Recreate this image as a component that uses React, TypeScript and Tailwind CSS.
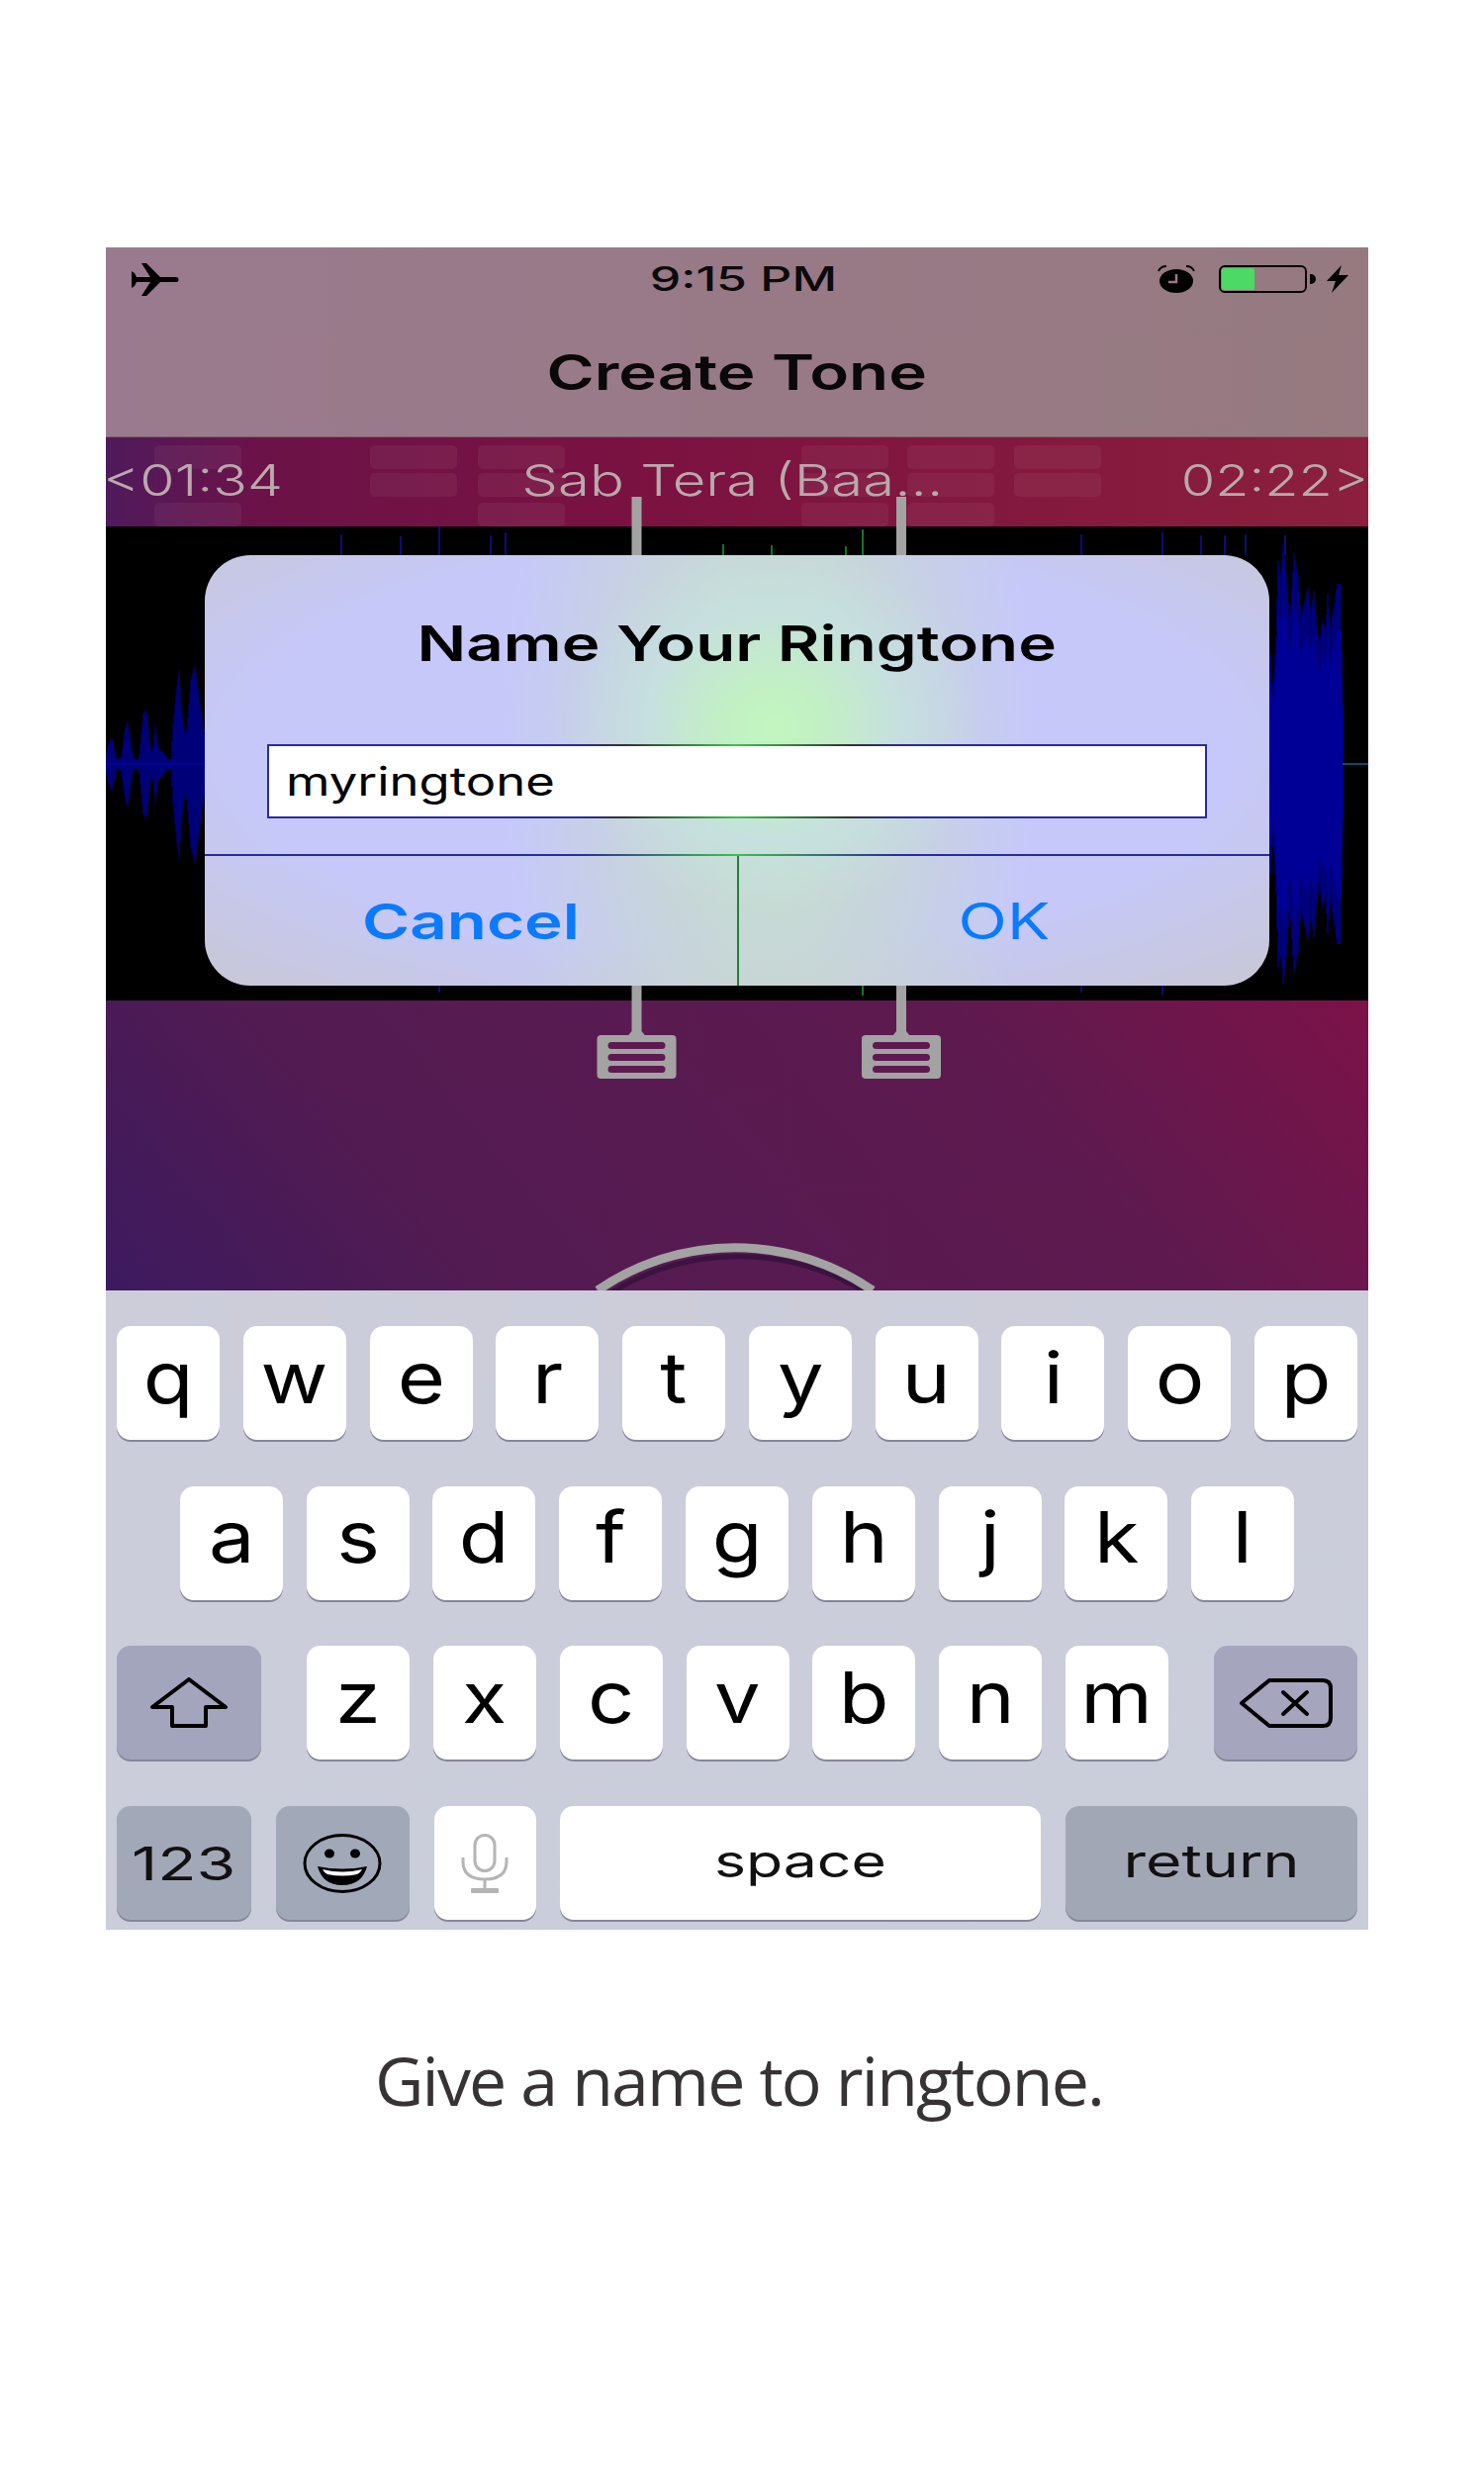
import React from "react";

const interp = (pts: number[][], x: number) => {
  for (let i = 0; i < pts.length - 1; i++) {
    const [a, av] = pts[i];
    const [b, bv] = pts[i + 1];
    if (x >= a && x <= b) return av + ((bv - av) * (x - a)) / (b - a);
  }
  return 0;
};

const leftPts = [
  [107, 5], [109, 18], [111, 22], [113, 27], [115, 18], [117, 8], [119, 4], [123, 8], [125, 25], [127, 38], [129, 42],
  [131, 30], [133, 15], [135, 6], [139, 4], [141, 10], [143, 30], [145, 50], [147, 55], [149, 50], [151, 25], [153, 12],
  [155, 18], [157, 40], [159, 22], [161, 14], [165, 12], [167, 8], [169, 5], [173, 5], [175, 40], [177, 60], [179, 80],
  [181, 95], [183, 60], [185, 45], [187, 30], [189, 35], [191, 60], [193, 85], [195, 92], [197, 100], [199, 85], [201, 70],
  [203, 55], [205, 40], [207, 30],
];
const rightPts = [
  [1283, 125], [1287, 70], [1290, 130], [1292, 205], [1295, 190], [1297, 222], [1300, 195], [1303, 150], [1305, 160],
  [1308, 212], [1312, 190], [1315, 145], [1318, 160], [1322, 178], [1325, 150], [1328, 175], [1331, 140], [1333, 120],
  [1337, 145], [1340, 130], [1342, 172], [1345, 130], [1347, 150], [1350, 170], [1352, 182], [1355, 182], [1357, 50],
];
const xs = (from: number, to: number, step: number) => {
  const out: number[] = [];
  for (let x = from; x <= to; x += step) out.push(x);
  return out;
};

const blueTicks = [
  [345, 540, 561], [405, 542, 561], [444, 532, 561], [496, 541, 561], [511, 538, 561], [1093, 540, 561], [1175, 538, 561],
  [1214, 541, 561], [1238, 541, 561], [1259, 540, 561], [1299, 541, 561], [444, 996, 1003], [1093, 996, 1003], [1175, 996, 1005],
];
const greenTicks = [
  [731, 550, 561], [780, 551, 561], [855, 552, 561], [872, 535, 561], [872, 996, 1006],
];

const Waveform = () => (
  <svg viewBox="0 0 1276 479" className="absolute inset-0 h-full w-full">
    <line x1="0" y1="240" x2="100" y2="240" stroke="#0a0a70" strokeWidth="2" />
    {xs(107, 207, 1).map((x) => {
      const a = interp(leftPts, x);
      return <line key={x} x1={x - 107} x2={x - 107} y1={240 - a} y2={240 + a} stroke="#0000a0" strokeWidth="1" />;
    })}
    {xs(1283, 1357, 1).map((x) => {
      const a = interp(rightPts, x);
      return <line key={x} x1={x - 107} x2={x - 107} y1={240 - a} y2={240 + a} stroke={x % 5 === 0 ? "#00006e" : "#00009a"} strokeWidth="1.2" />;
    })}
    {xs(1283, 1357, 1).map((x) => {
      const a = Math.max(60, interp(rightPts, x) * 0.74);
      return <line key={`core-${x}`} x1={x - 107} x2={x - 107} y1={240 - a} y2={240 + a} stroke="#000098" strokeWidth="1.5" />;
    })}
    <line x1="1250" y1="240" x2="1276" y2="240" stroke="#0c4a66" strokeWidth="2" />
    {blueTicks.map(([x, a, b]) => (
      <line key={`${x}-${a}`} x1={x - 107} x2={x - 107} y1={a - 532} y2={b - 532} stroke="#12129a" strokeWidth="1.5" />
    ))}
    {greenTicks.map(([x, a, b]) => (
      <line key={`${x}-${a}`} x1={x - 107} x2={x - 107} y1={a - 532} y2={b - 532} stroke="#1f9a35" strokeWidth="1.5" />
    ))}
  </svg>
);

const Handle = ({ x }: { x: number }) => (
  <g>
    <rect x={x - 5} y="60" width="10" height="540" fill="#a3a3a3" />
    <polygon points={`${x - 5},600 ${x + 5},600 ${x + 9},605 ${x - 9},605`} fill="#a3a3a3" />
    <rect x={x - 40} y="604" width="80" height="44" rx="4" fill="#a3a3a3" />
    {[611, 623, 635].map((y) => (
      <rect key={y} x={x - 29} y={y} width="58" height="7" rx="3.5" fill="#5e1a50" />
    ))}
  </g>
);

const Overlay = () => (
  <svg viewBox="0 0 1276 862" className="absolute inset-0 h-full w-full">
    <Handle x={536.5} />
    <Handle x={804} />
    <path d="M506 862 A245 245 0 0 1 769 862" fill="none" stroke="#3c1240" strokeWidth="5" transform="translate(2 4)" />
    <path d="M497 862 A245 245 0 0 1 775 862" fill="none" stroke="#a3a3a3" strokeWidth="9" />
  </svg>
);

const squares = [
  [156, 450], [374, 450], [483, 450], [810, 450], [917, 450], [1025, 450],
  [374, 478], [483, 478], [810, 478], [917, 478], [1025, 478],
  [156, 508], [483, 508], [810, 508], [917, 508],
];

const Key = ({ children, className }: { children?: React.ReactNode; className: string }) => (
  <div className={`flex h-[115px] items-center justify-center rounded-[14px] shadow-[0_2px_0_#85869a] ${className}`}>{children}</div>
);

const Letter = ({ c }: { c: string }) => (
  <Key className="w-[104px] bg-white">
    <span className="inline-block pb-[12px] font-['Inter'] text-[72px] leading-none text-black scale-x-[1.15]">{c}</span>
  </Key>
);

const App = () => (
  <div className="min-h-[2500px] bg-white pt-[250px] font-['Inter',sans-serif]">
    <div className="ml-[107px] w-[1276px]">
      {/* Nav */}
      <div className="h-[192px] border-b border-[#7d5f68] bg-[linear-gradient(90deg,#9a7a8e,#967a80)]">
        <div className="grid h-[60px] grid-cols-[1fr_auto_1fr] items-center px-[26px] pt-[4px]">
          <svg width="48" height="33" viewBox="0 0 48 33">
            <path d="M0 8 L3 10 L5 14 H19 L10 0 H15 L29 14 H45 A2.5 2.5 0 0 1 45 19 H29 L15 33 H10 L19 19 H5 L3 23 L0 25 Z" fill="#000" />
          </svg>
          <span className="ml-[12px] inline-block text-[34px] font-medium leading-none text-[#0d0a0c] scale-x-[1.47]">9:15 PM</span>
          <div className="flex items-center justify-end">
            <svg width="38" height="28" viewBox="0 0 38 28" className="mr-[24px]">
              <ellipse cx="19" cy="16" rx="17" ry="12" fill="#000" />
              <path d="M19 9 V17 H11" stroke="#9a7a80" strokeWidth="2.5" fill="none" />
              <path d="M1 6 Q3 1 9 1 M37 6 Q35 1 29 1" stroke="#000" strokeWidth="2" fill="none" />
            </svg>
            <div className="flex h-[28px] w-[89px] items-stretch rounded-[6px] border-2 border-black p-[1px]">
              <div className="w-[33px] rounded-[2px] bg-[#4cd964]" />
            </div>
            <div className="ml-[3px] h-[10px] w-[6px] rounded-r-full bg-black" />
            <svg width="22" height="28" viewBox="0 0 22 28" className="ml-[11px] mr-[-6px]">
              <path d="M15 0 L0 16 H9 L5 28 L22 10 H12 Z" fill="#000" />
            </svg>
          </div>
        </div>
        <div className="flex h-[131px] items-center justify-center">
          <span className="inline-block text-[50px] font-semibold leading-none text-[#0a0808] scale-x-[1.31]">Create Tone</span>
        </div>
      </div>

      <div className="relative">
        {/* Time strip */}
        <div className="relative flex h-[90px] items-center justify-between bg-[linear-gradient(90deg,#4f1a5c_0%,#6b1248_12%,#7c1240_45%,#8b1f3d_100%)] pb-[4px] text-[44px] font-light leading-none text-[#b9a9ac]">
          <svg viewBox="0 0 1276 90" className="absolute inset-0 h-full w-full">
            {squares.map(([x, y]) => (
              <rect key={`${x}-${y}`} x={x - 107} y={y - 442} width="88" height="24" rx="5" fill="#ffffff" opacity="0.05" />
            ))}
          </svg>
          <span className="relative ml-[-3px] inline-block origin-left scale-x-[1.3]">&lt;01:34</span>
          <span className="relative ml-[4px] inline-block scale-x-[1.32]">Sab Tera (Baa...</span>
          <span className="relative inline-block origin-right scale-x-[1.27]">02:22&gt;</span>
        </div>

        {/* Waveform */}
        <div className="relative h-[479px] bg-black">
          <Waveform />
        </div>

        {/* Lower area */}
        <div className="h-[293px] bg-[linear-gradient(50deg,#3c1a5f_0%,#521b52_25%,#5e1a4f_72%,#7c1248_100%)]" />

        <Overlay />

        {/* Dialog */}
        <div className="absolute left-[100px] top-[119px] flex h-[435px] w-[1076px] flex-col rounded-[46px] bg-[radial-gradient(ellipse_210px_190px_at_575px_172px,#c2f6bf_0%,#c2f0c4_22%,rgba(198,226,226,0.75)_62%,rgba(198,200,250,0)_100%),radial-gradient(ellipse_270px_560px_at_570px_195px,rgba(198,232,186,0.8)_0%,rgba(200,222,196,0.55)_50%,rgba(200,220,200,0)_100%),radial-gradient(ellipse_820px_335px_at_50%_45%,#c6c8fa_60%,#c8c8d2_100%)]">
          <div className="mt-[60px] flex h-[58px] items-center justify-center">
            <span className="inline-block text-[50px] font-semibold leading-none text-black scale-x-[1.31]">Name Your Ringtone</span>
          </div>
          <div className="mx-[63px] mt-[73px] h-[75px] bg-[linear-gradient(90deg,#2b2b9b_0%,#2b2b9b_33%,#333_38%,#3fbf4f_50%,#333_62%,#2b2b9b_68%,#2b2b9b_100%)] p-[2px]">
            <div className="flex h-full items-center bg-white pl-[17px]">
              <span className="inline-block origin-left text-[40px] leading-none text-black scale-x-[1.27]">myringtone</span>
            </div>
          </div>
          <div className="mt-[36px] h-[2px] bg-[linear-gradient(90deg,#2b2b9b_0%,#2b2b9b_35%,#3fbf4f_50%,#2b2b9b_65%,#2b2b9b_100%)]" />
          <div className="flex flex-1">
            <div className="flex w-[540px] items-center justify-center border-r-2 border-[#2a7d3a]">
              <span className="inline-block text-[50px] font-semibold leading-none text-[#0a7aff] scale-x-[1.31]">Cancel</span>
            </div>
            <div className="flex flex-1 items-center justify-center">
              <span className="inline-block text-[50px] leading-none text-[#0a7aff] scale-x-[1.29]">OK</span>
            </div>
          </div>
        </div>
      </div>

      {/* Keyboard */}
      <div className="flex h-[646px] flex-col gap-[46.7px] bg-[linear-gradient(170deg,#cdcdda,#c9cdda)] px-[11px] pt-[36px]">
        <div className="flex justify-between">
          {"qwertyuiop".split("").map((c) => (
            <Letter key={c} c={c} />
          ))}
        </div>
        <div className="flex justify-center gap-[23.8px]">
          {"asdfghjkl".split("").map((c) => (
            <Letter key={c} c={c} />
          ))}
        </div>
        <div className="flex items-center justify-between">
          <Key className="w-[146px] bg-[#a3a5bd]">
            <svg width="78" height="52" viewBox="0 0 78 52">
              <path d="M39 2 L76 30 H56 V49 H22 V30 H2 Z" fill="none" stroke="#000" strokeWidth="4" strokeLinejoin="round" />
            </svg>
          </Key>
          <div className="flex gap-[23.8px]">
            {"zxcvbnm".split("").map((c) => (
              <Letter key={c} c={c} />
            ))}
          </div>
          <Key className="w-[145px] bg-[#a5a5bd]">
            <svg width="94" height="50" viewBox="0 0 94 50">
              <path d="M30 2 H84 Q92 2 92 10 V40 Q92 48 84 48 H30 L2 25 Z" fill="none" stroke="#000" strokeWidth="4" strokeLinejoin="round" />
              <path d="M44 14 L68 36 M68 14 L44 36" stroke="#000" strokeWidth="4" strokeLinecap="round" />
            </svg>
          </Key>
        </div>
        <div className="flex justify-between">
          <Key className="w-[136px] bg-[#a2a8b8]">
            <span className="inline-block text-[46px] leading-none text-[#111] scale-x-[1.4]">123</span>
          </Key>
          <Key className="w-[135px] bg-[#a1a8b8]">
            <svg width="80" height="60" viewBox="0 0 80 60">
              <ellipse cx="40" cy="30" rx="38" ry="28.5" fill="none" stroke="#000" strokeWidth="3" />
              <ellipse cx="27" cy="20" rx="5" ry="4.5" fill="#000" />
              <ellipse cx="53" cy="20" rx="5" ry="4.5" fill="#000" />
              <path d="M15 33 Q40 38 65 33 Q60 52 40 52 Q20 52 15 33 Z" fill="#000" />
              <path d="M20 36 Q40 41 60 36 Q58 40 55 41 Q40 44 25 41 Q22 40 20 36 Z" fill="#fff" />
            </svg>
          </Key>
          <Key className="w-[103px] bg-white">
            <svg width="48" height="60" viewBox="0 0 48 60">
              <rect x="14" y="1.5" width="20" height="36" rx="10" fill="none" stroke="#b5b5b5" strokeWidth="3" />
              <path d="M2 24 V28 Q2 46 24 46 Q46 46 46 28 V24" fill="none" stroke="#b5b5b5" strokeWidth="3" />
              <path d="M24 46 V56" stroke="#b5b5b5" strokeWidth="3" />
              <rect x="10" y="55" width="28" height="5" rx="1" fill="#b5b5b5" />
            </svg>
          </Key>
          <Key className="w-[486px] bg-white">
            <span className="inline-block pb-[6px] text-[46px] leading-none text-[#111] scale-x-[1.32]">space</span>
          </Key>
          <Key className="w-[295px] bg-[#a2a7b6]">
            <span className="inline-block pb-[6px] text-[46px] leading-none text-[#111] scale-x-[1.36]">return</span>
          </Key>
        </div>
      </div>
    </div>

    {/* Caption */}
    <p className="mt-[107px] pr-[6px] text-center font-['Open_Sans',sans-serif] text-[68px] leading-[90px] tracking-[-1.8px] text-[#373334]">
      Give a name to ringtone.
    </p>
  </div>
);

export default App;
